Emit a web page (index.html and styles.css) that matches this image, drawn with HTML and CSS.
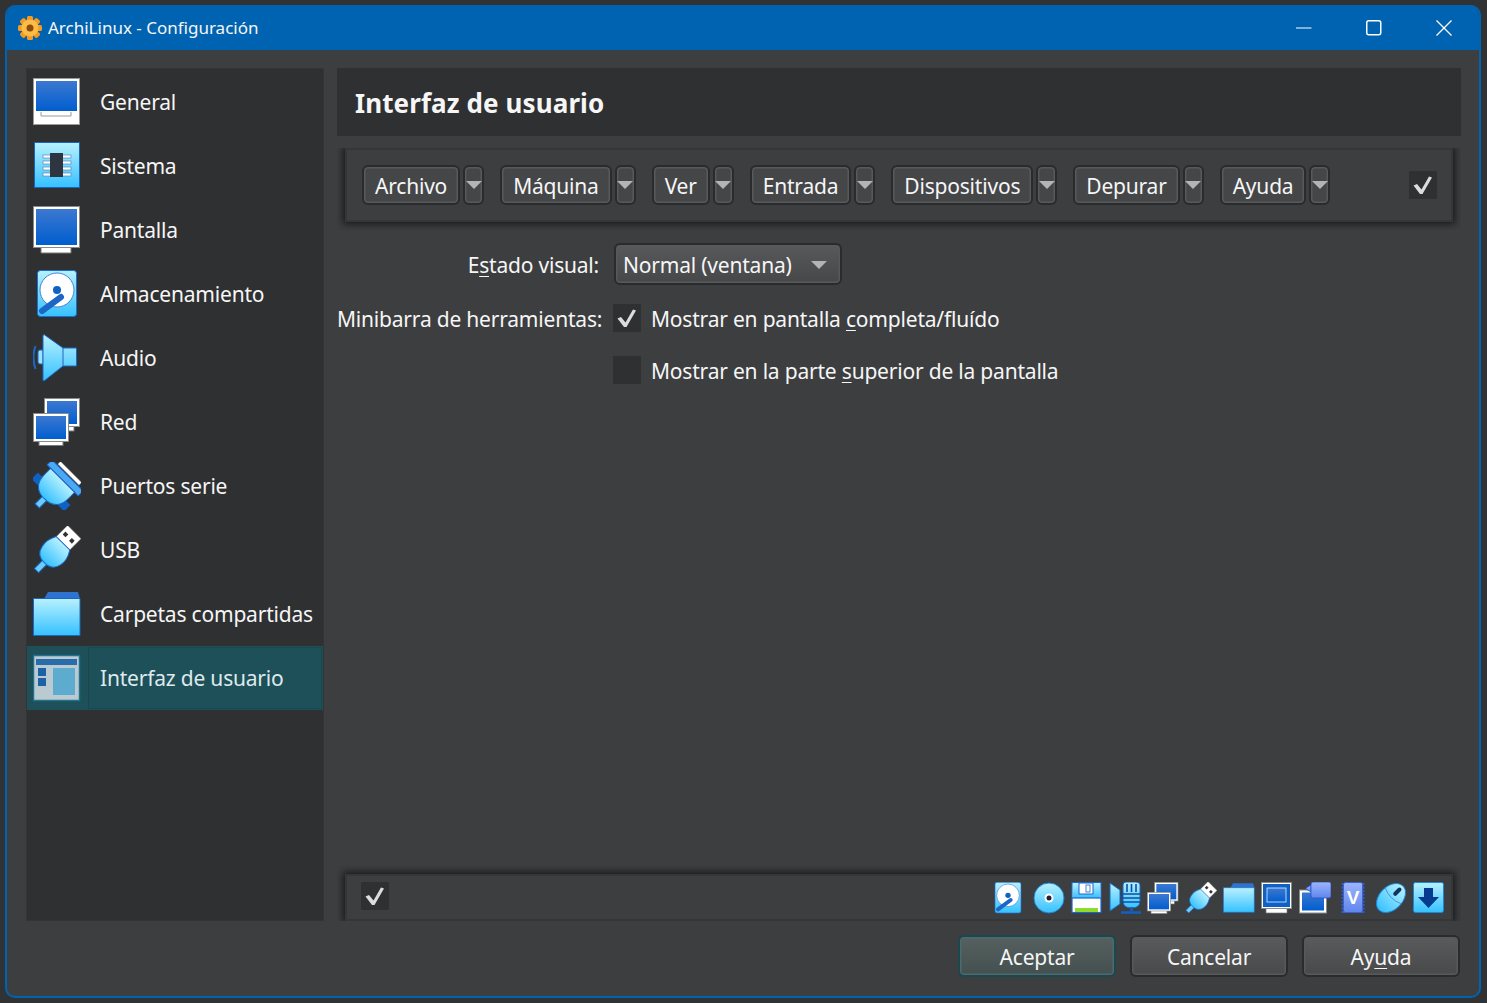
FILE: index.html
```html
<!DOCTYPE html>
<html lang="es">
<head>
    <meta charset="UTF-8">
    <title>ArchiLinux - Configuración</title>
    <link rel="stylesheet" href="styles.css">
</head>
<body>
    <!-- shared gradients and icons -->
    <svg class="defs" xmlns="http://www.w3.org/2000/svg">
        <defs>
            <linearGradient id="sky" x1="0" y1="0" x2="0" y2="1">
                <stop offset="0" stop-color="#b8f1ff"/>
                <stop offset="1" stop-color="#35c1ff"/>
            </linearGradient>
            <linearGradient id="blue" x1="0" y1="0" x2="0" y2="1">
                <stop offset="0" stop-color="#3c78d0"/>
                <stop offset="1" stop-color="#005ecf"/>
            </linearGradient>
            <linearGradient id="peri" x1="0" y1="0" x2="0" y2="1">
                <stop offset="0" stop-color="#9db4fb"/>
                <stop offset="1" stop-color="#5f86ee"/>
            </linearGradient>
        </defs>
        <symbol id="i-general" viewBox="0 0 48 48">
            <rect x=".5" y=".5" width="46" height="46" fill="#fff" stroke="#9a9a9a"/>
            <rect x="3" y="3" width="41" height="30" fill="url(#blue)"/>
            <path d="M8 34v4h30v-4" fill="none" stroke="#9a9a9a"/>
        </symbol>
        <symbol id="i-system" viewBox="0 0 48 48">
            <rect x="1.500" y=".5" width="45" height="45" fill="url(#sky)" stroke="#1c62c0"/>
            <g fill="#fff" stroke="#5a88b8" stroke-width=".7">
                <rect x="10" y="13" width="28" height="3"/>
                <rect x="10" y="19" width="28" height="3"/>
                <rect x="10" y="25" width="28" height="3"/>
                <rect x="10" y="31" width="28" height="3"/>
            </g>
            <rect x="17" y="11" width="13" height="24" fill="#2e3440"/>
        </symbol>
        <symbol id="i-display" viewBox="0 0 48 48">
            <path d="M8 38h30v9H8z" fill="#fff" stroke="#777"/>
            <rect x=".5" y=".5" width="46" height="41" fill="#fff" stroke="#8a8a8a"/>
            <rect x="3" y="3" width="41" height="36" fill="url(#blue)"/>
        </symbol>
        <symbol id="i-storage" viewBox="0 0 48 48">
            <rect x="4.500" y=".5" width="39" height="46" rx="3" fill="url(#sky)" stroke="#1c6fd0"/>
            <circle cx="24" cy="20" r="17" fill="#fff" stroke="#3f86d8"/>
            <circle cx="24" cy="20" r="4" fill="#0f62c4"/>
            <path d="M9 41 28 27" stroke="#1c66c6" stroke-width="6" stroke-linecap="round"/>
        </symbol>
        <symbol id="i-audio" viewBox="0 0 48 48">
            <path d="M2.500 12q-4 11 0 23" fill="none" stroke="#1c66c6" stroke-width="2"/>
            <path d="M10 16H7q-2 0-2 2v10q0 2 2 2h3z" fill="#9be4ff" stroke="#1c66c6"/>
            <path d="M11 .5 30 14h13.500v18H30L11 47q-1 0-1-1V2q0-1 1-1.500z" fill="url(#sky)" stroke="#1c66c6"/>
            <path d="M30 14v18" stroke="#1c66c6"/>
        </symbol>
        <symbol id="i-network" viewBox="0 0 48 48">
            <rect x="15" y="26" width="26" height="7" fill="#fff" stroke="#777"/>
            <rect x="11.500" y=".5" width="35" height="28" fill="#fff" stroke="#8a8a8a"/>
            <rect x="14" y="3" width="30" height="23" fill="url(#blue)"/>
            <rect x="6" y="40" width="24" height="7.500" fill="#fff" stroke="#777"/>
            <rect x=".5" y="15.500" width="35" height="28" fill="#fff" stroke="#8a8a8a"/>
            <rect x="3" y="18" width="30" height="23" fill="url(#blue)"/>
        </symbol>
        <symbol id="i-serial" viewBox="0 0 48 48">
            <g transform="rotate(45 24 24)">
                <rect x="9" y="4" width="30" height="4" fill="#fff" stroke="#666" stroke-width=".5"/>
                <rect x="2" y="9" width="44" height="7" fill="#4aa8f4" stroke="#1c66c6"/>
                <rect x="1" y="28" width="9" height="9" fill="#0f62c4"/>
                <rect x="38" y="28" width="9" height="9" fill="#0f62c4"/>
                <rect x="21" y="40" width="6" height="12" fill="#69cdfd" stroke="#1c66c6"/>
                <path d="M7 16h34v8q0 18-17 18T7 24z" fill="url(#sky)" stroke="#1c66c6"/>
            </g>
        </symbol>
        <symbol id="i-usb" viewBox="0 0 48 48">
            <g transform="rotate(45 24 24)">
                <rect x="21" y="40" width="6" height="13" fill="#69cdfd" stroke="#1c66c6"/>
                <rect x="14" y="-1" width="19" height="17" fill="#fff" stroke="#777" stroke-width=".6"/>
                <rect x="17" y="5" width="4" height="4" fill="#333"/>
                <rect x="26" y="5" width="4" height="4" fill="#333"/>
                <path d="M14 15h19q6 9 4 17-2 10-13 10T11 32q-2-8 3-17z" fill="url(#sky)" stroke="#1c66c6"/>
            </g>
        </symbol>
        <symbol id="i-folder" viewBox="0 0 48 48">
            <path d="M11 9l4-7h30l2 7z" fill="#2e73d0"/>
            <path d="M.5 8.500h46.500v37H.5z" fill="url(#sky)" stroke="#1c66c6"/>
        </symbol>
        <symbol id="i-ui" viewBox="0 0 48 48">
            <rect x=".5" y="1.500" width="46" height="45" fill="#b9cbd1" stroke="#23708f" stroke-width="1.500"/>
            <rect x="3" y="5" width="41" height="6" fill="#2a6caa"/>
            <rect x="5" y="14" width="8" height="8" fill="#1d62a6"/>
            <rect x="5" y="24" width="8" height="8" fill="#1d62a6"/>
            <rect x="20" y="14" width="22" height="27" fill="#5dabce"/>
        </symbol>
        <symbol id="i-cd" viewBox="0 0 32 32">
            <circle cx="16" cy="16" r="15" fill="url(#sky)" stroke="#1c86d8"/>
            <circle cx="16" cy="16" r="4.500" fill="#fff"/>
            <circle cx="16" cy="16" r="2.500" fill="#223"/>
        </symbol>
        <symbol id="i-floppy" viewBox="0 0 32 32">
            <rect x="1" y=".5" width="29" height="30" fill="#fff" stroke="#1c66c6" stroke-width="1.200"/>
            <rect x="2" y="1" width="27" height="15" fill="url(#sky)"/>
            <rect x="8" y="1" width="14" height="11" fill="#fff" stroke="#1c66c6"/>
            <rect x="15" y="3" width="4" height="7" fill="#fff" stroke="#1c66c6" stroke-width=".8"/>
            <path d="M1 16h29" stroke="#1c66c6" stroke-width="1.200"/>
            <rect x="4" y="26" width="23" height="4" fill="#8fdc2c"/>
        </symbol>
        <symbol id="i-mic" viewBox="0 0 32 32">
            <path d="M1 1l10 7v14L1 29z" fill="url(#sky)" stroke="#1c66c6"/>
            <path d="M14 3q0-3 3-3h10q4 0 4 3v16q0 7-8.500 7T14 19z" fill="url(#sky)" stroke="#1c66c6"/>
            <path d="M18 2v8M22.500 2v8M27 2v8M11 12h21M11 16h21M11 20h21" stroke="#0f4f9f" stroke-width="1.600"/>
            <path d="M22.500 25v4M12 30.500h20" stroke="#0f62c4" stroke-width="2.400"/>
        </symbol>
        <symbol id="i-monitor" viewBox="0 0 32 32">
            <path d="M5 26h21v5H5z" fill="#fff" stroke="#777" stroke-width=".7"/>
            <rect x=".5" y=".5" width="30" height="26" fill="#fff" stroke="#8a8a8a"/>
            <rect x="2" y="2" width="27" height="23" fill="#0f62c4"/>
            <rect x="6" y="6" width="19" height="14" fill="url(#blue)" stroke="#dfefff" stroke-width=".8"/>
        </symbol>
        <symbol id="i-video" viewBox="0 0 32 32">
            <rect x=".5" y="8" width="27" height="23" fill="#fff" stroke="#8a8a8a"/>
            <rect x="3" y="10.500" width="22" height="18" fill="url(#blue)"/>
            <path d="M7 7l5 3V3L7 6z" fill="url(#peri)" stroke="#1c4fc0" stroke-width=".7"/>
            <path d="M12 2q0-2 2-2h16q2 0 2 2v12q0 2-2 2H14q-2 0-2-2z" fill="url(#peri)" stroke="#1c4fc0" stroke-width=".7"/>
        </symbol>
        <symbol id="i-mouse" viewBox="0 0 32 32">
            <g transform="rotate(45 16 16)">
                <ellipse cx="16" cy="16" rx="11.500" ry="17" fill="url(#sky)" stroke="#1c86d8"/>
                <path d="M5 13q11 5 22 0" fill="none" stroke="#3f86d8" stroke-width=".8"/>
                <rect x="14" y="2" width="4" height="10" rx="2" fill="#12355f"/>
            </g>
        </symbol>
        <symbol id="i-download" viewBox="0 0 32 32">
            <rect x=".5" y=".5" width="30" height="30" rx="2" fill="url(#sky)" stroke="#1c86d8"/>
            <path d="M11 6h9v9h6L15.500 26 5 15h6z" fill="#063b8d"/>
        </symbol>
        <symbol id="i-check" viewBox="0 0 28 28">
            <path d="M4.500 14.500 8 13l4.500 5.500L20 5.500l3 1L13.500 23H11z" fill="#dcdcdc"/>
        </symbol>
    </svg>

    <div class="window">
        <header class="titlebar">
            <svg class="app-icon" viewBox="0 0 24 24">
                <g fill="#f79a1d">
                    <rect x="9" y="0" width="6" height="24" rx="1.500"/>
                    <rect x="9" y="0" width="6" height="24" rx="1.500" transform="rotate(45 12 12)"/>
                    <rect x="9" y="0" width="6" height="24" rx="1.500" transform="rotate(90 12 12)"/>
                    <rect x="9" y="0" width="6" height="24" rx="1.500" transform="rotate(135 12 12)"/>
                </g>
                <circle cx="12" cy="12" r="8.500" fill="#fdbb48"/>
                <circle cx="12" cy="12" r="3.500" fill="#8a4c08"/>
            </svg>
            <span class="title-text">ArchiLinux - Configuración</span>
            <div class="win-controls">
                <svg viewBox="0 0 16 16"><path d="M0 8h15.500" stroke="#fff" fill="none"/></svg>
                <svg viewBox="0 0 16 16"><rect x=".75" y=".75" width="14" height="14" rx="2" stroke="#fff" stroke-width="1.500" fill="none"/></svg>
                <svg viewBox="0 0 16 16"><path d="M.5.500l15 15M15.500.500l-15 15" stroke="#fff" stroke-width="1.300" fill="none"/></svg>
            </div>
        </header>

        <div class="content">
            <div class="columns">
                <nav class="sidebar">
                    <div class="nav-item"><svg class="nav-icon"><use href="#i-general"/></svg><span>General</span></div>
                    <div class="nav-item"><svg class="nav-icon"><use href="#i-system"/></svg><span>Sistema</span></div>
                    <div class="nav-item"><svg class="nav-icon"><use href="#i-display"/></svg><span>Pantalla</span></div>
                    <div class="nav-item"><svg class="nav-icon"><use href="#i-storage"/></svg><span>Almacenamiento</span></div>
                    <div class="nav-item"><svg class="nav-icon"><use href="#i-audio"/></svg><span>Audio</span></div>
                    <div class="nav-item"><svg class="nav-icon"><use href="#i-network"/></svg><span>Red</span></div>
                    <div class="nav-item"><svg class="nav-icon"><use href="#i-serial"/></svg><span>Puertos serie</span></div>
                    <div class="nav-item"><svg class="nav-icon"><use href="#i-usb"/></svg><span>USB</span></div>
                    <div class="nav-item"><svg class="nav-icon"><use href="#i-folder"/></svg><span>Carpetas compartidas</span></div>
                    <div class="nav-item selected"><svg class="nav-icon"><use href="#i-ui"/></svg><span>Interfaz de usuario</span></div>
                </nav>

                <main class="main">
                    <h1 class="page-title">Interfaz de usuario</h1>

                    <div class="panel-clip top">
                        <div class="panel menu-panel">
                            <div class="menu-group"><button class="tool-btn">Archivo</button><button class="arrow-btn"></button></div>
                            <div class="menu-group"><button class="tool-btn">Máquina</button><button class="arrow-btn"></button></div>
                            <div class="menu-group"><button class="tool-btn">Ver</button><button class="arrow-btn"></button></div>
                            <div class="menu-group"><button class="tool-btn">Entrada</button><button class="arrow-btn"></button></div>
                            <div class="menu-group"><button class="tool-btn">Dispositivos</button><button class="arrow-btn"></button></div>
                            <div class="menu-group"><button class="tool-btn">Depurar</button><button class="arrow-btn"></button></div>
                            <div class="menu-group"><button class="tool-btn">Ayuda</button><button class="arrow-btn"></button></div>
                            <span class="check push"><svg><use href="#i-check"/></svg></span>
                        </div>
                    </div>

                    <div class="form">
                        <div class="form-row combo-row">
                            <label class="form-label">E<u>s</u>tado visual:</label>
                            <div class="combo">Normal (ventana)</div>
                        </div>
                        <div class="form-row check-row">
                            <label class="form-label">Minibarra de herramientas:</label>
                            <span class="check"><svg><use href="#i-check"/></svg></span>
                            <span class="check-text">Mostrar en pantalla <u>c</u>ompleta/fluído</span>
                        </div>
                        <div class="form-row check-row second">
                            <span class="form-label"></span>
                            <span class="check"></span>
                            <span class="check-text">Mostrar en la parte <u>s</u>uperior de la pantalla</span>
                        </div>
                    </div>

                    <div class="panel-clip bottom">
                        <div class="panel status-panel">
                            <span class="check"><svg><use href="#i-check"/></svg></span>
                            <div class="status-icons">
                                <svg class="nudge"><use href="#i-storage"/></svg>
                                <svg><use href="#i-cd"/></svg>
                                <svg><use href="#i-floppy"/></svg>
                                <svg><use href="#i-mic"/></svg>
                                <svg><use href="#i-network"/></svg>
                                <svg><use href="#i-usb"/></svg>
                                <svg><use href="#i-folder"/></svg>
                                <svg><use href="#i-monitor"/></svg>
                                <svg><use href="#i-video"/></svg>
                                <svg viewBox="0 0 32 32">
                                    <path d="M6 1v30M26 1v30" stroke="#2f5bd0" stroke-width="3" stroke-dasharray="2 1.500"/>
                                    <rect x="6.500" y=".5" width="19" height="30" rx="2" fill="url(#peri)" stroke="#3a62d8"/>
                                    <text class="chip-letter" x="16" y="22" text-anchor="middle">V</text>
                                </svg>
                                <svg><use href="#i-mouse"/></svg>
                                <svg><use href="#i-download"/></svg>
                            </div>
                        </div>
                    </div>
                </main>
            </div>

            <footer class="actions">
                <button class="action-btn default">Aceptar</button>
                <button class="action-btn">Cancelar</button>
                <button class="action-btn">Ay<u>u</u>da</button>
            </footer>
        </div>
    </div>
</body>
</html>
```

FILE: styles.css
```css
:root {
    --blue: #0063b1;
    --bg: #3d3e40;
    --dark: #2f3032;
    --edge: #2a2b2d;
    --text: #f6f6f6;
}

* {
    box-sizing: border-box;
}

html, body {
    height: 100%;
}

body {
    margin: 0;
    padding: 5px 6px 5px 5px;
    background: #313233;
    color: var(--text);
    font-family: "Noto Sans", "Open Sans", sans-serif;
    font-size: 21px;
    letter-spacing: -0.2px;
    overflow: hidden;
}

.defs {
    display: block;
    width: 0;
    height: 0;
}

u {
    text-underline-offset: 3px;
    text-decoration-thickness: 1px;
}

button {
    font: inherit;
    letter-spacing: inherit;
    color: inherit;
}

.window {
    height: 993px;
    display: flex;
    flex-direction: column;
    border: 2px solid var(--blue);
    border-top: 0;
    border-radius: 10px;
    background: var(--bg);
    overflow: hidden;
}

/* title bar */
.titlebar {
    height: 45px;
    flex: none;
    display: flex;
    align-items: center;
    background: var(--blue);
    padding-left: 11px;
}

.app-icon {
    width: 24px;
    height: 24px;
    margin-right: 6px;
}

.title-text {
    font-size: 17px;
    letter-spacing: 0;
    padding-bottom: 1px;
}

.win-controls {
    margin-left: auto;
    display: flex;
    gap: 54px;
    padding-right: 27px;
}

.win-controls svg {
    width: 16px;
    height: 16px;
    display: block;
}

/* body */
.content {
    flex: 1;
    display: flex;
    flex-direction: column;
    padding: 18px 18px 19px 19px;
}

.columns {
    flex: 1;
    display: flex;
    gap: 13px;
    min-height: 0;
}

.sidebar {
    width: 298px;
    flex: none;
    background: var(--dark);
    border: 1px solid #333436;
    padding-top: 1px;
}

.nav-item {
    height: 64px;
    display: flex;
    align-items: center;
    padding-left: 6px;
    gap: 19px;
    white-space: nowrap;
}

.nav-item span {
    padding-bottom: 1px;
}

.nav-icon {
    width: 48px;
    height: 48px;
    flex: none;
}

.nav-item.selected {
    background: #1d5059;
    color: #dfeaec;
    position: relative;
}

.nav-item.selected::after {
    content: "";
    position: absolute;
    left: 61px;
    right: 1px;
    top: 1px;
    bottom: 1px;
    border: 1px solid #1a464e;
}

.main {
    flex: 1;
    min-width: 0;
    display: flex;
    flex-direction: column;
}

.page-title {
    margin: 0;
    height: 68px;
    flex: none;
    display: flex;
    align-items: center;
    padding: 2px 0 0 18px;
    background: var(--dark);
    font-size: 26px;
    font-weight: 700;
    letter-spacing: 0.1px;
}

/* shadowed panels: the shadow is cut on the open side */
.panel-clip {
    flex: none;
    overflow: hidden;
    padding: 0 8px;
}

.panel-clip.top {
    margin-top: 12px;
    padding-bottom: 8px;
}

.panel-clip.bottom {
    margin-top: auto;
    padding-top: 8px;
}

.panel {
    display: flex;
    align-items: center;
    border: 2px solid #353638;
    box-shadow: 0 0 7px 2px #191919;
}

.menu-panel {
    height: 74px;
    padding: 0 14px 0 15px;
    gap: 16px;
}

.status-panel {
    height: 47px;
    align-items: flex-start;
    padding: 6px 6px 0 14px;
}

.menu-group {
    display: flex;
    gap: 3px;
    flex: none;
}

.tool-btn,
.arrow-btn,
.combo,
.action-btn {
    border: 2px solid var(--edge);
    border-radius: 6px;
    box-shadow: inset 0 0 0 1.5px #58595b;
}

.tool-btn {
    height: 40px;
    padding: 2px 11px 0;
    background: #454648;
    white-space: nowrap;
}

.arrow-btn {
    width: 21px;
    height: 40px;
    padding: 0;
    flex: none;
    background: #454648;
    display: flex;
    align-items: center;
    justify-content: center;
}

.arrow-btn::after,
.combo::after {
    content: "";
    border-style: solid;
    border-width: 8px 8px 0;
    border-color: #b4b4b4 transparent transparent;
}

.check {
    width: 28px;
    height: 28px;
    flex: none;
    background: var(--dark);
    border-radius: 1px;
}

.check svg {
    width: 28px;
    height: 28px;
    display: block;
}

.push {
    margin-left: auto;
}

/* form */
.form {
    margin-top: 13px;
    display: flex;
    flex-direction: column;
}

.form-row {
    display: flex;
    align-items: center;
}

.form-label {
    width: 264px;
    flex: none;
    text-align: right;
    margin-right: 12px;
    padding: 2px 2px 0 0;
    white-space: nowrap;
}

.combo {
    width: 228px;
    height: 42px;
    margin-left: 1px;
    padding: 2px 13px 0 7px;
    display: flex;
    align-items: center;
    justify-content: space-between;
    background: linear-gradient(#58595b, #464749);
}

.check-row {
    height: 28px;
    margin-top: 19px;
}

.check-row.second {
    margin-top: 24px;
}

.check-text {
    margin-left: 10px;
    padding-top: 2px;
    white-space: nowrap;
}

/* bottom indicators */
.status-icons {
    margin-left: auto;
    display: flex;
    gap: 6px;
}

.status-icons svg {
    width: 32px;
    height: 32px;
    display: block;
}

.status-icons .nudge {
    margin: 0 3px 0 -3px;
}

.chip-letter {
    font-family: "Liberation Sans", sans-serif;
    font-size: 19px;
    font-weight: 700;
    fill: #fff;
}

/* dialog buttons */
.actions {
    flex: none;
    display: flex;
    justify-content: flex-end;
    gap: 14px;
    margin-top: 14px;
    padding-right: 1px;
}

.action-btn {
    width: 158px;
    height: 42px;
    padding-top: 2px;
    background: linear-gradient(#5a5b5c, #484949);
}

.action-btn.default {
    border-color: #1b484f;
    box-shadow: inset 0 0 0 1.5px #4d6a6f;
    background: linear-gradient(#55605f, #44504f);
}
```
